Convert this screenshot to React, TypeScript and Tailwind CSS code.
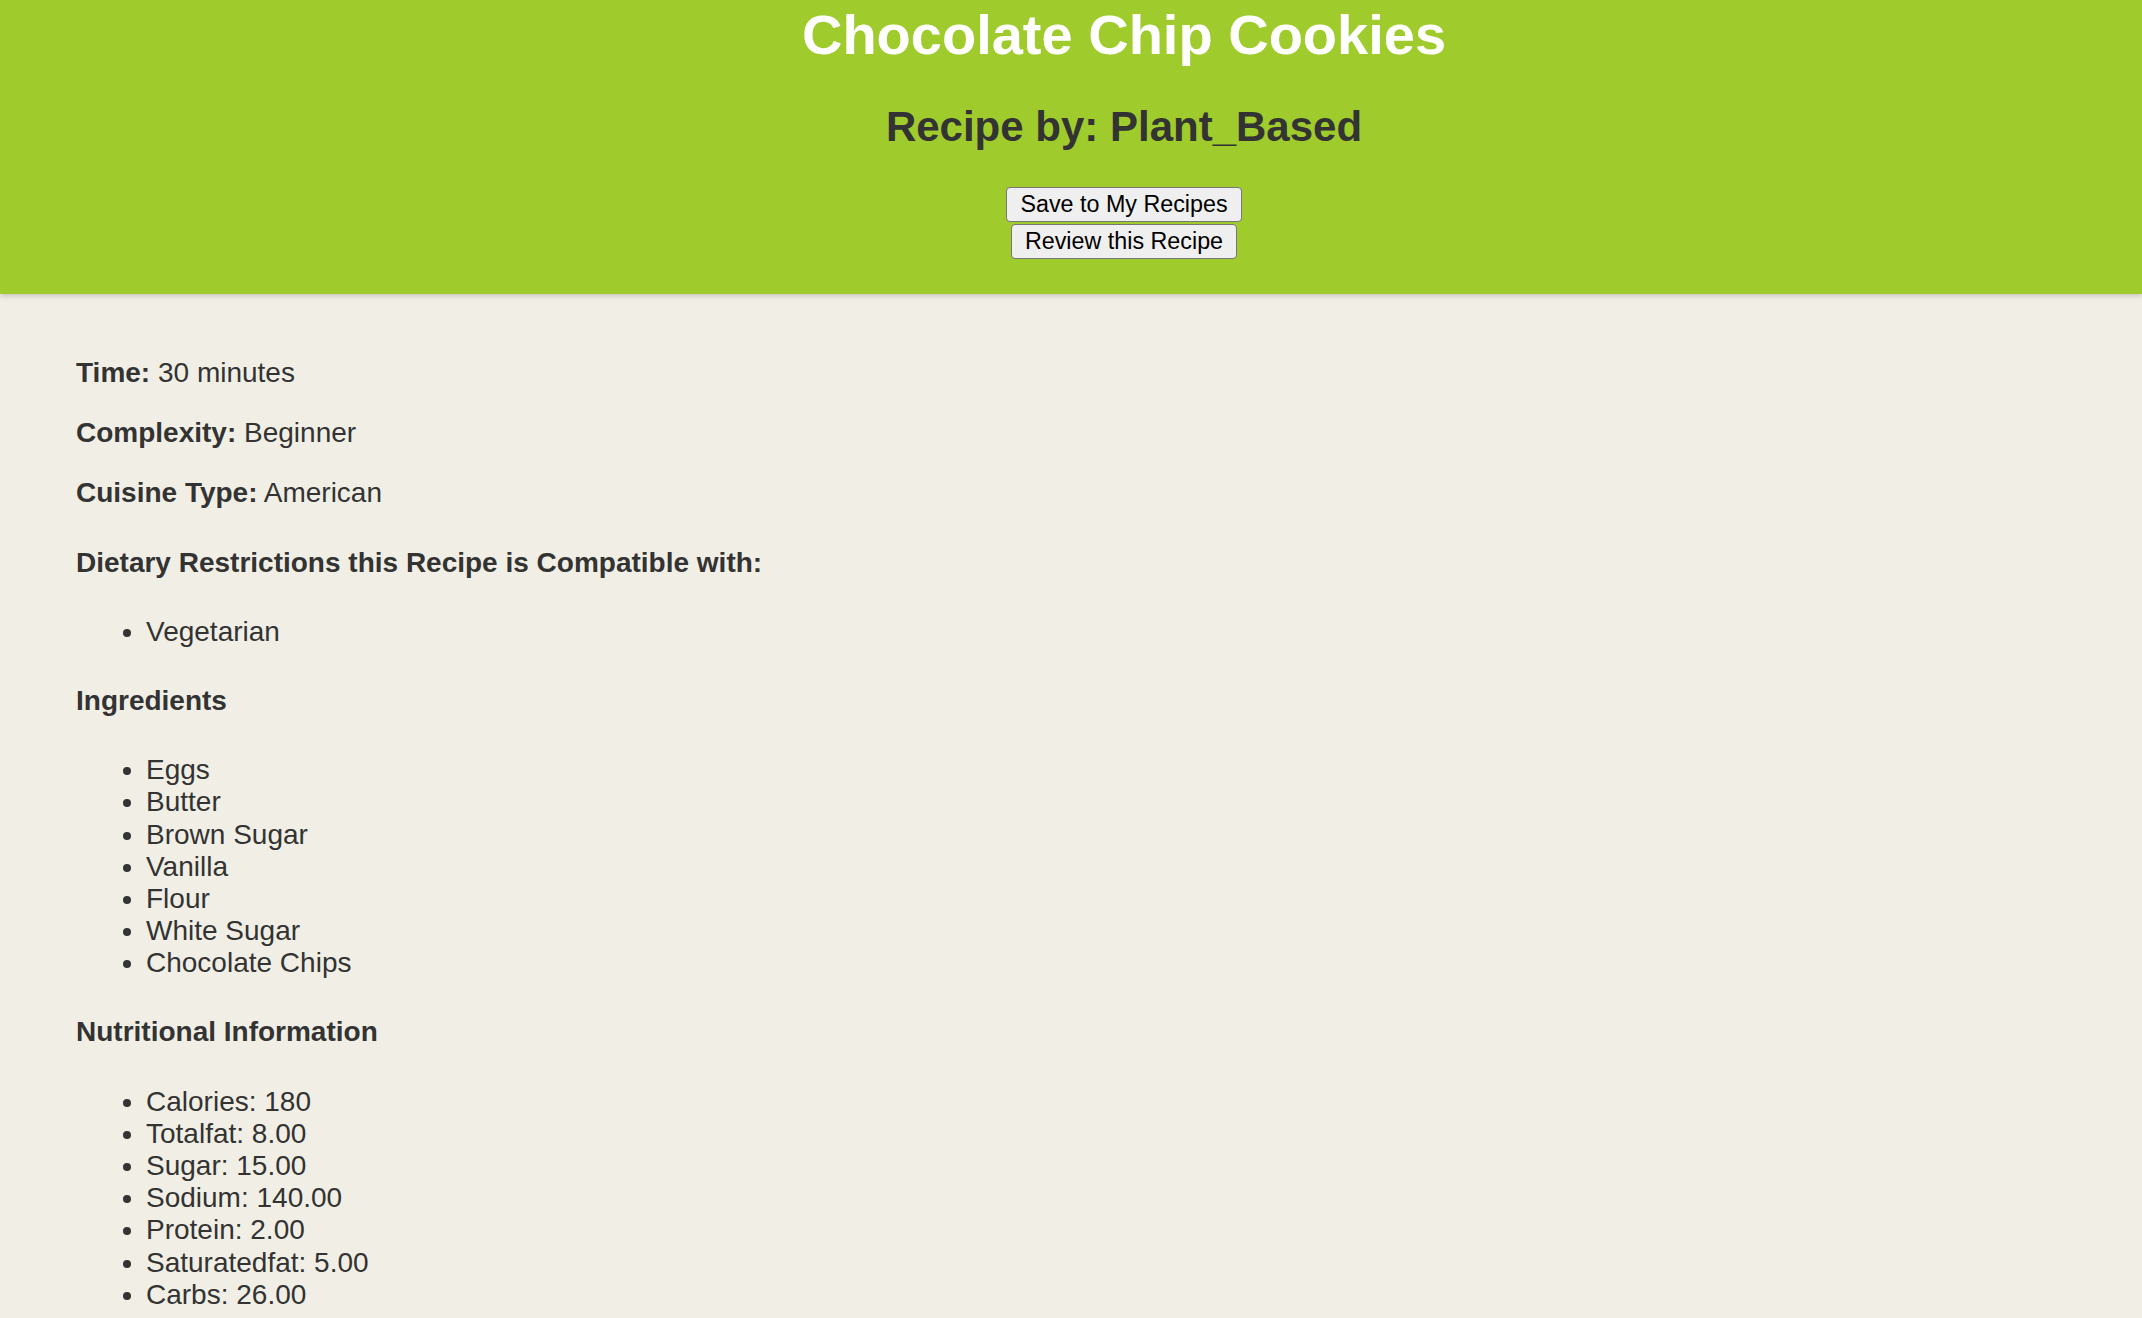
const details = [
  { label: "Time:", value: "30 minutes" },
  { label: "Complexity:", value: "Beginner" },
  { label: "Cuisine Type:", value: "American" },
];

const diets = ["Vegetarian"];

const ingredients = [
  "Eggs",
  "Butter",
  "Brown Sugar",
  "Vanilla",
  "Flour",
  "White Sugar",
  "Chocolate Chips",
];

const nutrition = [
  "Calories: 180",
  "Totalfat: 8.00",
  "Sugar: 15.00",
  "Sodium: 140.00",
  "Protein: 2.00",
  "Saturatedfat: 5.00",
  "Carbs: 26.00",
];

const RecipeButton = ({ children }: { children: React.ReactNode }) => {
  return (
    <button className="bg-[#efefef] border border-[#767676] rounded-[4px] px-[13px] py-[3px] text-[23.3px] leading-[27px] text-black">
      {children}
    </button>
  );
};

const App = () => {
  return (
    <div className="min-h-screen bg-[#f1efe5] text-[#333] font-['Liberation_Sans',Arial,Helvetica,sans-serif]">
      <header className="bg-[#9fcb2c] text-center pt-[3px] pb-[35px] pl-[106px] shadow-[0_2px_5px_rgba(0,0,0,0.18)]">
        <h1 className="text-white font-bold text-[56px] leading-[64px]">
          Chocolate Chip Cookies
        </h1>
        <h2 className="mt-[36px] font-bold text-[42px] leading-[48px]">
          Recipe by: Plant_Based
        </h2>
        <div className="mt-[36px] flex flex-col items-center gap-[2px]">
          <RecipeButton>Save to My Recipes</RecipeButton>
          <RecipeButton>Review this Recipe</RecipeButton>
        </div>
      </header>
      <main className="pt-[35px] px-[76px] text-[28px] leading-[1.15]">
        {details.map((d) => (
          <p key={d.label} className="my-[28px]">
            <strong>{d.label}</strong> {d.value}
          </p>
        ))}
        <h4 className="my-[37px] font-bold">
          Dietary Restrictions this Recipe is Compatible with:
        </h4>
        <ul className="my-[28px] pl-[70px] list-disc">
          {diets.map((d) => (
            <li key={d}>{d}</li>
          ))}
        </ul>
        <h4 className="my-[37px] font-bold">Ingredients</h4>
        <ul className="my-[28px] pl-[70px] list-disc">
          {ingredients.map((i) => (
            <li key={i}>{i}</li>
          ))}
        </ul>
        <h4 className="my-[37px] font-bold">Nutritional Information</h4>
        <ul className="my-[28px] pl-[70px] list-disc">
          {nutrition.map((n) => (
            <li key={n}>{n}</li>
          ))}
        </ul>
      </main>
    </div>
  );
};

export default App;
